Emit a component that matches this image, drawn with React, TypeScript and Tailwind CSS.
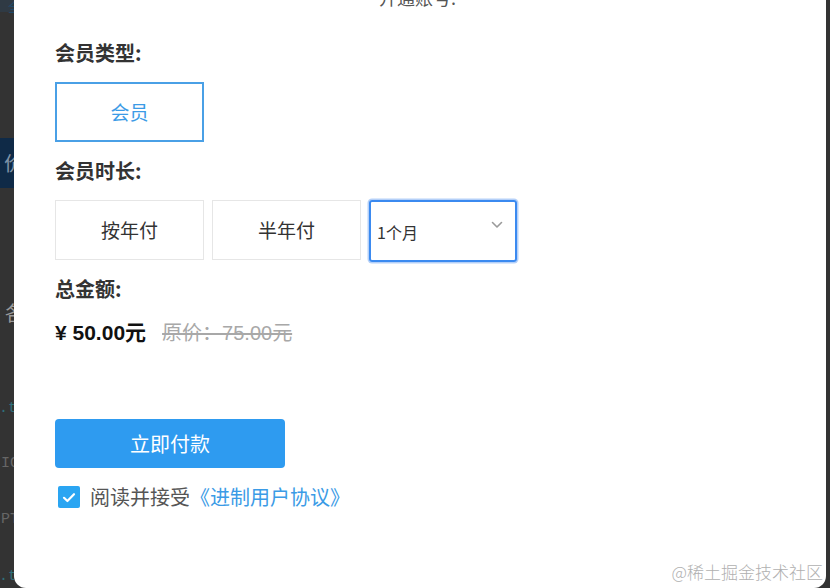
import React from "react";

const font = { fontFamily: '"Noto Sans CJK SC", "Noto Sans", sans-serif' };

export default function App() {
  return (
    <div
      className="flex h-[588px] w-[830px] overflow-hidden bg-[#333333]"
      style={font}
    >
      {/* left dark backdrop strip */}
      <div className="relative flex w-[14px] shrink-0 flex-col overflow-hidden">
        <div className="flex h-[12px] justify-end bg-[#2f3a44] text-[14px] leading-[12px] text-[#1f4a6a]">
          <span className="-mr-[8px]">全</span>
        </div>
        <div className="mt-[126px] flex h-[50px] items-center justify-end bg-[#0f2a47] text-[20px] text-[#7f93a8]">
          <span className="-mr-[10px]">价</span>
        </div>
        <div className="mt-[110px] flex justify-end text-[20px] text-[#999]">
          <span className="-mr-[11px]">各</span>
        </div>
        <div className="mt-[70px] flex justify-end font-['Liberation_Mono'] text-[15px] text-[#2f6f7a]">
          <span className="-mr-[3px]">.t</span>
        </div>
        <div className="mt-[32px] flex justify-end font-['Liberation_Mono'] text-[15px] text-[#666]">
          <span className="-mr-[5px]">IO</span>
        </div>
        <div className="mt-[34px] flex justify-end font-['Liberation_Mono'] text-[15px] text-[#666]">
          <span className="-mr-[5px]">PT</span>
        </div>
        <div className="mt-[34px] flex justify-end font-['Liberation_Mono'] text-[15px] text-[#2f6f7a]">
          <span className="-mr-[3px]">.t</span>
        </div>
      </div>

      {/* modal */}
      <div className="relative flex w-[812px] shrink-0 flex-col rounded-b-[12px] bg-white pl-[41px]">
        <div className="-mt-[15px] -ml-[46px] text-center text-[18px] leading-[24px] text-[#555]">
          开通账号:
        </div>

        <div className="mt-[32px] text-[20px] font-bold leading-[24px] text-[#333]">
          会员类型:
        </div>
        <div className="mt-[17px] flex h-[60px] w-[149px] items-center justify-center border-2 border-[#4aa0e6] text-[19px] text-[#3b9be6]">
          会员
        </div>

        <div className="mt-[17px] text-[20px] font-bold leading-[24px] text-[#333]">
          会员时长:
        </div>
        <div className="mt-[17px] flex gap-[8px]">
          <div className="flex h-[60px] w-[149px] items-center justify-center border border-[#e6e6e6] text-[19px] text-[#333]">
            按年付
          </div>
          <div className="flex h-[60px] w-[149px] items-center justify-center border border-[#e6e6e6] text-[19px] text-[#333]">
            半年付
          </div>
          <div className="flex h-[62px] w-[148px] items-center justify-between rounded-[3px] border-2 border-[#3b8af0] pl-[6px] pr-[12px] shadow-[0_0_0_1.5px_rgba(90,150,240,0.45)]">
            <span className="mt-[2px] text-[16px] text-[#333]">1个月</span>
            <svg
              width="12"
              height="8"
              viewBox="0 0 12 8"
              className="-mt-[12px]"
              fill="none"
            >
              <path
                d="M1.5 1.5 L6 6 L10.5 1.5"
                stroke="#9a9a9a"
                strokeWidth="1.6"
                strokeLinecap="round"
                strokeLinejoin="round"
              />
            </svg>
          </div>
        </div>

        <div className="mt-[15px] text-[20px] font-bold leading-[24px] text-[#333]">
          总金额:
        </div>
        <div className="mt-[18px] flex items-baseline gap-[16px] leading-[28px]">
          <span className="font-['Liberation_Sans','Noto_Sans_CJK_SC',sans-serif] text-[21px] font-bold text-[#111]">
            ¥ 50.00元
          </span>
          <span className="font-['Liberation_Sans','Noto_Sans_CJK_SC',sans-serif] text-[20px] text-[#a8a8a8] line-through">
            原价：75.00元
          </span>
        </div>

        <button className="mt-[72px] flex h-[49px] w-[230px] items-center justify-center rounded-[4px] bg-[#2e9bf0] text-[20px] text-white">
          立即付款
        </button>

        <div className="mt-[14px] flex items-center">
          <div className="ml-[3px] flex h-[22px] w-[22px] items-center justify-center rounded-[2px] bg-[#2aa5f2]">
            <svg width="14" height="11" viewBox="0 0 14 11" fill="none">
              <path
                d="M2 5.8 L5.4 9 L12 2.2"
                stroke="white"
                strokeWidth="2.2"
                strokeLinecap="round"
                strokeLinejoin="round"
              />
            </svg>
          </div>
          <span className="ml-[10px] text-[20px] text-[#555]">阅读并接受</span>
          <span className="text-[20px] text-[#3b9be6]">《进制用户协议》</span>
        </div>

        <div className="absolute bottom-[5px] right-[3px] text-[17px] font-light leading-[22px] text-[#b0b0b0]">
          @稀土掘金技术社区
        </div>
      </div>

      <div className="flex-1" />
    </div>
  );
}
